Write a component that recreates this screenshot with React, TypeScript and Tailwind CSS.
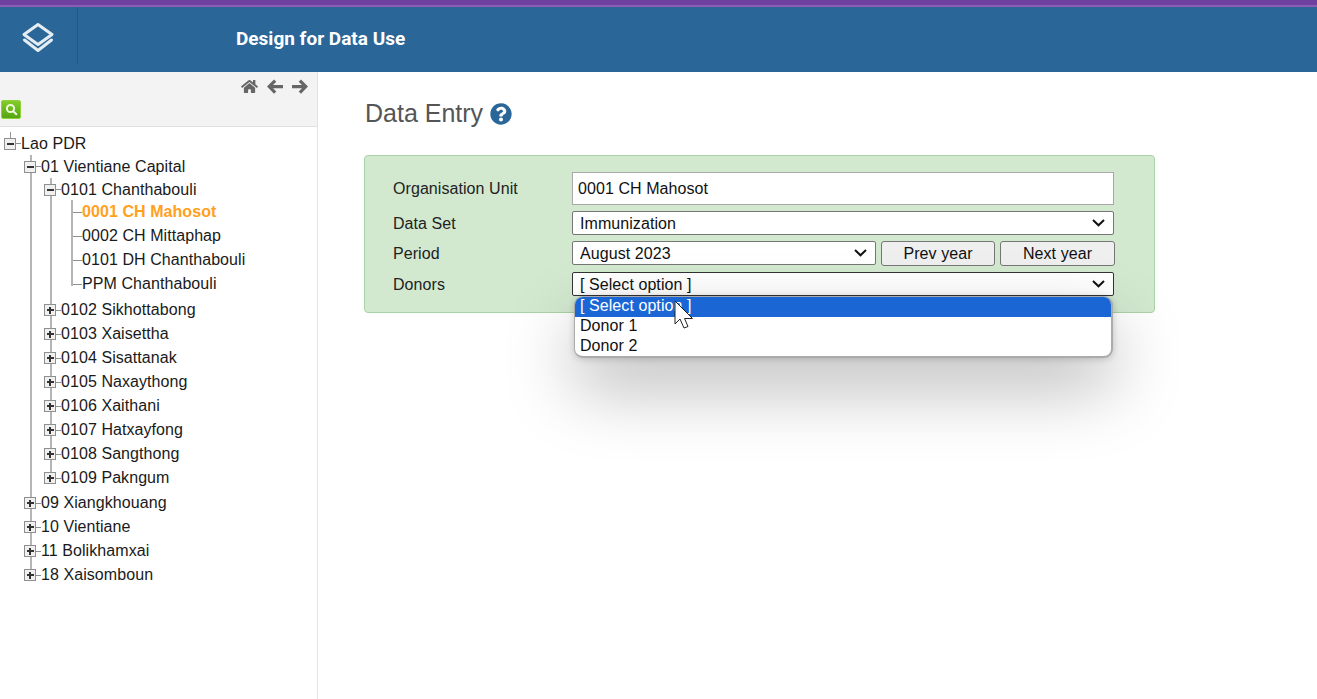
import React from 'react';
import { FaHome, FaQuestionCircle } from 'react-icons/fa';

type TreeNode = { name: string; open?: boolean; active?: boolean; children?: TreeNode[] };

const TREE: TreeNode = {
  name: 'Lao PDR',
  open: true,
  children: [
    {
      name: '01 Vientiane Capital',
      open: true,
      children: [
        {
          name: '0101 Chanthabouli',
          open: true,
          children: [
            { name: '0001 CH Mahosot', active: true },
            { name: '0002 CH Mittaphap' },
            { name: '0101 DH Chanthabouli' },
            { name: 'PPM Chanthabouli' },
          ],
        },
        { name: '0102 Sikhottabong', children: [] },
        { name: '0103 Xaisettha', children: [] },
        { name: '0104 Sisattanak', children: [] },
        { name: '0105 Naxaythong', children: [] },
        { name: '0106 Xaithani', children: [] },
        { name: '0107 Hatxayfong', children: [] },
        { name: '0108 Sangthong', children: [] },
        { name: '0109 Pakngum', children: [] },
      ],
    },
    { name: '09 Xiangkhouang', children: [] },
    { name: '10 Vientiane', children: [] },
    { name: '11 Bolikhamxai', children: [] },
    { name: '18 Xaisomboun', children: [] },
  ],
};

const Toggle = ({ open }: { open?: boolean }) => (
  <span className="relative z-10 -ml-[1px] flex h-[12px] w-[12px] shrink-0 items-center justify-center border border-[#8f8f8f] bg-[#f0f0f0]">
    <span className="absolute h-[2px] w-[7px] bg-[#333]" />
    {!open && <span className="absolute h-[7px] w-[2px] bg-[#333]" />}
  </span>
);

const Branch = ({ node }: { node: TreeNode }) => {
  const isLeaf = !node.children;
  const hasLeaves = node.open && node.children?.every((c) => !c.children);
  return (
    <li>
      <div className={`flex items-center ${node.open ? 'h-[23px]' : 'h-[24px]'}`}>
        {isLeaf ? (
          <span className="ml-[6px] h-px w-[11px] shrink-0 bg-[#8f8f8f]" />
        ) : (
          <>
            <Toggle open={node.open} />
            <span className="h-px w-[5px] shrink-0 bg-[#8f8f8f]" />
          </>
        )}
        <span className={node.active ? 'font-bold text-[#ffa01e]' : 'text-[#1a1a1a]'}>{node.name}</span>
      </div>
      {node.open && node.children && (
        <ul className={`relative pl-[20px] ${hasLeaves ? '-mt-[1px] pb-[2px]' : 'pb-[1px]'}`}>
          <span className={`absolute top-0 bottom-[12px] w-[2px] bg-[#b5b5b5] ${hasLeaves ? 'left-[26px]' : 'left-[25px]'}`} />
          {node.children.map((child) => (
            <Branch key={child.name} node={child} />
          ))}
        </ul>
      )}
    </li>
  );
};

const Chevron = () => (
  <svg className="pointer-events-none absolute right-[8px] top-[8px]" width="14" height="8" viewBox="0 0 14 8" fill="none" stroke="#111" strokeWidth="2">
    <path d="M1 1 L6.5 6.3 L12 1" />
  </svg>
);

const Select = ({ width, options, dark }: { width: string; options: string[]; dark?: boolean }) => (
  <div className={`relative self-start ${width}`}>
    <select
      className={`block h-[24px] w-full appearance-none rounded-[2px] border bg-white pl-[7px] text-[16px] text-[#111] ${dark ? 'border-[#333]' : 'border-[#767676]'}`}
      defaultValue={options[0]}
    >
      {options.map((o) => (
        <option key={o}>{o}</option>
      ))}
    </select>
    <Chevron />
  </div>
);

const Row = ({ label, low, children }: { label: string; low?: boolean; children: React.ReactNode }) => (
  <div className="flex items-center">
    <label className={`w-[179px] shrink-0 text-[#222] ${low ? 'translate-y-px' : ''}`}>{label}</label>
    {children}
  </div>
);

const App: React.FC = () => {
  return (
    <div className="flex h-[699px] w-full flex-col overflow-hidden bg-white font-['Liberation_Sans',sans-serif] text-[16px] tracking-[0.07px]">
      <div className="h-[7px] shrink-0 border-b-2 border-[#8e5cb5] bg-[#6f42a1]" />
      <header className="flex h-[65px] shrink-0 bg-[#2a6798]">
        <div className="flex h-[58px] w-[78px] items-center justify-center border-r border-[#255a87] pr-[2px] pt-[3px]">
          <svg width="36" height="32" viewBox="0 0 36 32" fill="none" stroke="#fff" strokeWidth="3" strokeLinejoin="round" strokeLinecap="round" opacity="0.88">
            <path d="M18 2.5 L32 12.5 L18 22.5 L4 12.5 Z" />
            <path d="M4.5 18 L18 28.5 L31.5 18" />
          </svg>
        </div>
        <h1 className="ml-[158px] mt-[20px] font-['Roboto',sans-serif] text-[19px] leading-[24px] font-bold tracking-normal text-white">
          Design for Data Use
        </h1>
      </header>
      <div className="flex min-h-0 flex-1">
        <aside className="w-[318px] shrink-0 border-r border-[#e3e3e3]">
          <div className="h-[55px] border-b border-[#e0e0e0] bg-[#f3f3f3]">
            <div className="flex h-[28px] items-center justify-end gap-[9px] pr-[9px] text-[#666]">
              <FaHome className="h-[15px] w-[17px]" />
              <svg width="16" height="15" viewBox="0 0 16 15" fill="currentColor">
                <path d="M0 7.5 L7 0.5 L9.3 2.7 L6 6 L16 6 L16 9.2 L6 9.2 L9.3 12.4 L7 14.7 Z" />
              </svg>
              <svg width="16" height="15" viewBox="0 0 16 15" fill="currentColor">
                <path d="M16 7.5 L9 0.5 L6.7 2.7 L10 6 L0 6 L0 9.2 L10 9.2 L6.7 12.4 L9 14.7 Z" />
              </svg>
            </div>
            <button className="ml-[1px] flex h-[19px] w-[20px] items-center justify-center rounded-[2px] border border-[#8ed33a] bg-gradient-to-b from-[#84cc2a] to-[#55a512]">
              <svg width="13" height="13" viewBox="0 0 13 13" fill="none" stroke="#eefbdc" strokeWidth="2" strokeLinecap="round">
                <circle cx="5.5" cy="5.5" r="3.6" />
                <path d="M8.4 8.4 L11.3 11.3" />
              </svg>
            </button>
          </div>
          <ul className="relative ml-[5px] mt-[5px]">
            <span className="absolute left-[5px] top-0 h-[8px] w-px bg-[#999]" />
            <Branch node={TREE} />
          </ul>
        </aside>
        <main className="relative flex-1 pl-[46px]">
          <h2 className="mt-[27px] flex h-[30px] items-center gap-[7px] pl-[1px] text-[25px] tracking-normal text-[#555]">
            Data Entry
            <FaQuestionCircle className="h-[22px] w-[22px] text-[#2a6798]" />
          </h2>
          <section className="relative mt-[26px] h-[158px] w-[791px] rounded-[4px] border border-[#a9d4a7] bg-[#d2e9d0] pl-[28px] pt-[16px]">
            <div className="flex flex-col gap-[6px]">
              <Row label="Organisation Unit">
                <input
                  readOnly
                  value="0001 CH Mahosot"
                  className="h-[33px] w-[542px] border border-[#a9a9a9] bg-white px-[5px] text-[16px] text-[#111]"
                />
              </Row>
              <Row label="Data Set" low>
                <Select width="w-[542px]" options={['Immunization']} />
              </Row>
              <Row label="Period">
                <Select width="w-[304px]" options={['August 2023']} />
                <button className="ml-[5px] h-[25px] w-[114px] rounded-[3px] border border-[#767676] bg-[#efefef] text-[#111]">Prev year</button>
                <button className="ml-[5px] h-[25px] w-[115px] rounded-[3px] border border-[#767676] bg-[#efefef] text-[#111]">Next year</button>
              </Row>
              <Row label="Donors" low>
                <Select width="w-[542px]" dark options={['[ Select option ]', 'Donor 1', 'Donor 2']} />
              </Row>
            </div>
            <div className="absolute left-[209px] top-[140px] z-20 w-[539px] overflow-hidden rounded-[9px] border border-b-2 border-r-2 border-[#ababab] bg-white leading-[17px] text-[#111] shadow-[0_1px_7px_rgba(0,0,0,0.18),0_30px_70px_rgba(0,0,0,0.28)]">
              <div className="h-[20px] bg-[#1a66d4] pl-[5px] text-white">[ Select option ]</div>
              <div className="h-[20px] pl-[5px]">Donor 1</div>
              <div className="h-[19px] pl-[5px]">Donor 2</div>
            </div>
            <svg className="absolute left-[309px] top-[144px] z-30" width="20" height="29" viewBox="0 0 20 29">
              <path d="M1 1 L1 24 L6 19 L10 28 L14 26.5 L10.5 18.5 L18.5 18.5 Z" fill="#fff" stroke="#222" strokeWidth="1" strokeLinejoin="round" />
            </svg>
          </section>
        </main>
      </div>
    </div>
  );
};

export default App;
